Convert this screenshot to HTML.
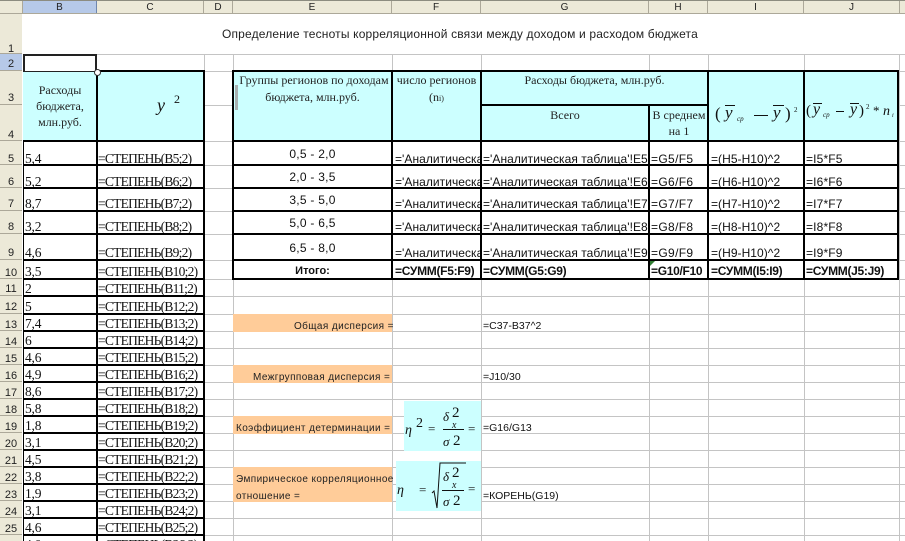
<!DOCTYPE html>
<html><head><meta charset="utf-8">
<style>
html,body{margin:0;padding:0;background:#fff}
#p{position:relative;width:905px;height:541px;overflow:hidden;background:#fff;font-family:"Liberation Sans",sans-serif;color:#000}
#p div{position:absolute}
.h{left:23px;width:882px;height:1px;background:#c4c4c4}
.v{width:1px;top:54px;height:487px;background:#c4c4c4}
.ch{top:1px;height:12px;background:#ece9d8;border-right:1px solid #aca899;box-sizing:border-box;font-size:10px;line-height:13px;text-align:center;color:#222}
.rh{left:0;width:22px;background:#ece9d8;border-bottom:1px solid #aca899;box-sizing:border-box;font-size:11px;text-align:center;color:#222}
.k{background:#000}
.r{left:0;width:905px;height:15px}
.r div{top:0;height:15px;line-height:15px;white-space:nowrap;overflow:hidden}
.b,.c{font-family:"Liberation Serif",serif;font-size:13.5px;color:#111}
.b{left:25px;width:70px;letter-spacing:-.2px}
.c{left:98px;width:105px;letter-spacing:-.75px}
.f,.g,.h2,.i,.j{font-size:12px;letter-spacing:.15px;color:#111}
.r .f,.r .g,.r .h2,.r .i,.r .j{top:1px}
.f{left:395px;width:86px;letter-spacing:.05px}
.g{left:483px;width:166px;letter-spacing:.05px}
.h2{left:651px;width:57px;letter-spacing:.35px}
.i{left:711px;width:93px;letter-spacing:.05px}
.j{left:806px;width:92px}
.r .bb{font-weight:bold;letter-spacing:-.3px;top:0}
.r .fm{font-size:10.5px;letter-spacing:0;top:3px}
.s{font-family:"Liberation Serif",serif;font-size:12px;color:#222;text-align:center;white-space:nowrap}
.o{background:#ffcc99}
.r .ot{font-size:10px;letter-spacing:.4px;white-space:nowrap;color:#222;top:3px}
.e{left:233px;width:159px;text-align:center;font-size:12px;line-height:15px;letter-spacing:.25px;color:#111}
svg{position:absolute;overflow:visible}
svg text{font-family:"Liberation Serif",serif;fill:#111}
</style></head><body><div id="p">

<!-- headers -->
<div style="left:0;top:0;width:905px;height:1px;background:#8c8c80"></div>
<div class="ch" style="left:0;width:23px"></div>
<div class="ch" style="left:23px;width:74px;background:#b6c9e8;border-right-color:#6f86ad">B</div>
<div class="ch" style="left:97px;width:107px">C</div>
<div class="ch" style="left:204px;width:29px">D</div>
<div class="ch" style="left:233px;width:159px">E</div>
<div class="ch" style="left:392px;width:89px">F</div>
<div class="ch" style="left:481px;width:168px">G</div>
<div class="ch" style="left:649px;width:59px">H</div>
<div class="ch" style="left:708px;width:96px">I</div>
<div class="ch" style="left:804px;width:96px">J</div>
<div class="ch" style="left:900px;width:5px;border:0"></div>
<div style="left:0;top:13px;width:905px;height:1px;background:#aca899"></div>

<div class="rh" style="top:14px;height:40px;line-height:70px">1</div>
<div class="rh" style="top:54px;height:17px;line-height:21px;background:#b6c9e8">2</div>
<div class="rh" style="top:71px;height:34px;line-height:54px">3</div>
<div class="rh" style="top:105px;height:36px;line-height:60px">4</div>
<div class="rh" style="top:141px;height:24px;line-height:37px">5</div>
<div class="rh" style="top:165px;height:23px;line-height:35px">6</div>
<div class="rh" style="top:188px;height:23px;line-height:33px">7</div>
<div class="rh" style="top:211px;height:23px;line-height:33px">8</div>
<div class="rh" style="top:234px;height:26px;line-height:38px">9</div>
<div class="rh" style="top:260px;height:19px;line-height:27px">10</div>
<div class="rh" style="top:279px;height:17px;line-height:20px">11</div>
<div class="rh" style="top:296px;height:18px;line-height:22px">12</div>
<div class="rh" style="top:314px;height:17px;line-height:22px">13</div>
<div class="rh" style="top:331px;height:17px;line-height:22px">14</div>
<div class="rh" style="top:348px;height:17px;line-height:22px">15</div>
<div class="rh" style="top:365px;height:17px;line-height:22px">16</div>
<div class="rh" style="top:382px;height:17px;line-height:22px">17</div>
<div class="rh" style="top:399px;height:17px;line-height:22px">18</div>
<div class="rh" style="top:416px;height:17px;line-height:22px">19</div>
<div class="rh" style="top:433px;height:17px;line-height:22px">20</div>
<div class="rh" style="top:450px;height:17px;line-height:22px">21</div>
<div class="rh" style="top:467px;height:17px;line-height:22px">22</div>
<div class="rh" style="top:484px;height:17px;line-height:22px">23</div>
<div class="rh" style="top:501px;height:17px;line-height:22px">24</div>
<div class="rh" style="top:518px;height:17px;line-height:22px">25</div>
<div class="rh" style="top:535px;height:6px;border:0"></div>

<!-- grid -->
<div class="h" style="top:54px"></div><div class="h" style="top:71px"></div><div class="h" style="top:105px"></div>
<div class="h" style="top:141px"></div><div class="h" style="top:165px"></div><div class="h" style="top:188px"></div>
<div class="h" style="top:211px"></div><div class="h" style="top:234px"></div><div class="h" style="top:260px"></div>
<div class="h" style="top:279px"></div><div class="h" style="top:296px"></div><div class="h" style="top:314px"></div>
<div class="h" style="top:331px"></div><div class="h" style="top:348px"></div><div class="h" style="top:365px"></div>
<div class="h" style="top:382px"></div><div class="h" style="top:399px"></div><div class="h" style="top:416px"></div>
<div class="h" style="top:433px"></div><div class="h" style="top:450px"></div><div class="h" style="top:467px"></div>
<div class="h" style="top:484px"></div><div class="h" style="top:501px"></div><div class="h" style="top:518px"></div>
<div class="h" style="top:535px"></div>
<div class="v" style="left:204px"></div><div class="v" style="left:233px"></div><div class="v" style="left:392px"></div>
<div class="v" style="left:481px"></div><div class="v" style="left:649px"></div><div class="v" style="left:708px"></div>
<div class="v" style="left:804px"></div><div class="v" style="left:899px"></div>

<!-- fills -->
<div style="left:23px;top:71px;width:181px;height:70px;background:#ccffff"></div>
<div style="left:233px;top:71px;width:665px;height:70px;background:#ccffff"></div>
<div style="left:233px;top:141px;width:665px;height:138px;background:#fff"></div>
<div style="left:23px;top:141px;width:181px;height:400px;background:#fff"></div>

<div class="o" style="left:233px;top:314px;width:159px;height:18px"></div>
<div class="o" style="left:233px;top:365px;width:159px;height:18px"></div>
<div class="o" style="left:233px;top:416px;width:159px;height:18px"></div>
<div class="o" style="left:233px;top:467px;width:159px;height:35px"></div>
<div style="left:404px;top:401px;width:77px;height:50px;background:#ccffff"></div>
<div style="left:396px;top:461px;width:85px;height:50px;background:#ccffff"></div>

<!-- title -->
<div style="left:23px;top:14px;width:876px;height:40px;background:#fff"></div>
<div style="left:222px;top:27px;font-size:12px;line-height:14px;letter-spacing:.17px;white-space:nowrap;color:#222">Определение тесноты корреляционной связи между доходом и расходом бюджета</div>

<!-- header text -->
<div class="s" style="left:23px;top:82px;width:74px;line-height:16px">Расходы<br>бюджета,<br>млн.руб.</div>
<svg style="left:0;top:0" width="905" height="541">
<text x="157" y="111" font-size="18" font-style="italic">y</text>
<text x="174" y="103" font-size="12">2</text>

<!-- (y_cp - y)^2 -->
<text x="715" y="119" font-size="17">(</text>
<text x="725" y="118" font-size="17" font-style="italic">y</text>
<line x1="725" y1="105.500" x2="735" y2="105.500" stroke="#111" stroke-width="1"/>
<text x="737" y="121" font-size="7" font-style="italic" fill="#777">cp</text>
<line x1="754" y1="115.500" x2="768" y2="115.500" stroke="#111" stroke-width="1"/>
<text x="773" y="118" font-size="17" font-style="italic">y</text>
<line x1="773" y1="105.500" x2="784" y2="105.500" stroke="#111" stroke-width="1"/>
<text x="785" y="119" font-size="17">)</text>
<text x="794" y="112" font-size="7">2</text>

<!-- (y_cp - y)^2*n -->
<text x="806" y="115" font-size="15">(</text>
<text x="813" y="114" font-size="16" font-style="italic">y</text>
<line x1="813" y1="103.500" x2="822" y2="103.500" stroke="#111" stroke-width="1"/>
<text x="823" y="117" font-size="7" font-style="italic" fill="#777">cp</text>
<line x1="836" y1="111.500" x2="844" y2="111.500" stroke="#111" stroke-width="1"/>
<text x="850" y="114" font-size="16" font-style="italic">y</text>
<line x1="850" y1="103.500" x2="859" y2="103.500" stroke="#111" stroke-width="1"/>
<text x="859" y="115" font-size="15">)</text>
<text x="866" y="109" font-size="7">2</text>
<text x="873" y="115" font-size="13">*</text>
<text x="883" y="115" font-size="14" font-style="italic">n</text>
<text x="892" y="117" font-size="6" font-style="italic" fill="#777">i</text>

<!-- eta^2 -->
<text x="405" y="434" font-size="14" font-style="italic">η</text>
<text x="416" y="427" font-size="14">2</text>
<text x="428" y="433" font-size="13">=</text>
<text x="443" y="421" font-size="13" font-style="italic">δ</text>
<text x="452" y="417" font-size="15">2</text>
<text x="452" y="428" font-size="10" font-style="italic">x</text>
<line x1="443" y1="429.500" x2="464" y2="429.500" stroke="#111" stroke-width="1"/>
<text x="443" y="446" font-size="13" font-style="italic">σ</text>
<text x="453" y="445" font-size="15">2</text>
<text x="468" y="433" font-size="13">=</text>

<!-- eta sqrt -->
<text x="397" y="494" font-size="14" font-style="italic">η</text>
<text x="419" y="494" font-size="13">=</text>
<path d="M432 493 L434 491 L437 508 L440 463 L466 463" fill="none" stroke="#111" stroke-width="1"/>
<text x="443" y="481" font-size="13" font-style="italic">δ</text>
<text x="452" y="477" font-size="15">2</text>
<text x="452" y="488" font-size="10" font-style="italic">x</text>
<line x1="442" y1="490.500" x2="464" y2="490.500" stroke="#111" stroke-width="1"/>
<text x="443" y="506" font-size="13" font-style="italic">σ</text>
<text x="453" y="505" font-size="15">2</text>
<text x="468" y="493" font-size="13">=</text>
</svg>

<div class="s" style="left:233px;top:72px;width:159px;line-height:17px">&nbsp;Группы регионов по доходам<br>бюджета, млн.руб.</div>
<div class="s" style="left:392px;top:72px;width:89px;line-height:17px">число регионов<br>(n<span style="font-size:8px">i)</span></div>
<div class="s" style="left:481px;top:72px;width:227px;line-height:17px">Расходы бюджета, млн.руб.</div>
<div class="s" style="left:481px;top:107px;width:168px;line-height:17px">Всего</div>
<div class="s" style="left:650px;top:107px;width:58px;line-height:16px">В среднем<br>на 1</div>
<div style="left:235px;top:85px;width:3px;height:25px;background:#a8b0b0"></div>

<!-- E labels -->
<div class="e" style="top:147px">0,5 - 2,0</div>
<div class="e" style="top:170px">2,0 - 3,5</div>
<div class="e" style="top:193px">3,5 - 5,0</div>
<div class="e" style="top:216px">5,0 - 6,5</div>
<div class="e" style="top:241px">6,5 - 8,0</div>
<div class="e" style="top:264px;font-size:11px;font-weight:bold;letter-spacing:0">Итого:</div>

<!-- rows -->
<div class="r" style="top:151px"><div class="b">5,4</div><div class="c">=СТЕПЕНЬ(B5;2)</div><div class="f">='Аналитическая таблица'!E5</div><div class="g">='Аналитическая таблица'!E5</div><div class="h2">=G5/F5</div><div class="i">=(H5-H10)^2</div><div class="j">=I5*F5</div></div>
<div class="r" style="top:174px"><div class="b">5,2</div><div class="c">=СТЕПЕНЬ(B6;2)</div><div class="f">='Аналитическая таблица'!E6</div><div class="g">='Аналитическая таблица'!E6</div><div class="h2">=G6/F6</div><div class="i">=(H6-H10)^2</div><div class="j">=I6*F6</div></div>
<div class="r" style="top:196px"><div class="b">8,7</div><div class="c">=СТЕПЕНЬ(B7;2)</div><div class="f">='Аналитическая таблица'!E7</div><div class="g">='Аналитическая таблица'!E7</div><div class="h2">=G7/F7</div><div class="i">=(H7-H10)^2</div><div class="j">=I7*F7</div></div>
<div class="r" style="top:219px"><div class="b">3,2</div><div class="c">=СТЕПЕНЬ(B8;2)</div><div class="f">='Аналитическая таблица'!E8</div><div class="g">='Аналитическая таблица'!E8</div><div class="h2">=G8/F8</div><div class="i">=(H8-H10)^2</div><div class="j">=I8*F8</div></div>
<div class="r" style="top:245px"><div class="b">4,6</div><div class="c">=СТЕПЕНЬ(B9;2)</div><div class="f">='Аналитическая таблица'!E9</div><div class="g">='Аналитическая таблица'!E9</div><div class="h2">=G9/F9</div><div class="i">=(H9-H10)^2</div><div class="j">=I9*F9</div></div>
<div class="r" style="top:264px"><div class="b">3,5</div><div class="c">=СТЕПЕНЬ(B10;2)</div><div class="f bb">=СУММ(F5:F9)</div><div class="g bb">=СУММ(G5:G9)</div><div class="h2 bb">=G10/F10</div><div class="i bb">=СУММ(I5:I9)</div><div class="j bb">=СУММ(J5:J9)</div></div>
<div class="r" style="top:281px"><div class="b">2</div><div class="c">=СТЕПЕНЬ(B11;2)</div></div>
<div class="r" style="top:299px"><div class="b">5</div><div class="c">=СТЕПЕНЬ(B12;2)</div></div>
<div class="r" style="top:316px"><div class="b">7,4</div><div class="c">=СТЕПЕНЬ(B13;2)</div><div class="ot" style="left:294px">Общая дисперсия =</div><div class="g fm">=C37-B37^2</div></div>
<div class="r" style="top:333px"><div class="b">6</div><div class="c">=СТЕПЕНЬ(B14;2)</div></div>
<div class="r" style="top:350px"><div class="b">4,6</div><div class="c">=СТЕПЕНЬ(B15;2)</div></div>
<div class="r" style="top:367px"><div class="b">4,9</div><div class="c">=СТЕПЕНЬ(B16;2)</div><div class="ot" style="left:253px">Межгрупповая дисперсия =</div><div class="g fm">=J10/30</div></div>
<div class="r" style="top:384px"><div class="b">8,6</div><div class="c">=СТЕПЕНЬ(B17;2)</div></div>
<div class="r" style="top:401px"><div class="b">5,8</div><div class="c">=СТЕПЕНЬ(B18;2)</div></div>
<div class="r" style="top:418px"><div class="b">1,8</div><div class="c">=СТЕПЕНЬ(B19;2)</div><div class="ot" style="left:236px">Коэффициент детерминации =</div><div class="g fm">=G16/G13</div></div>
<div class="r" style="top:435px"><div class="b">3,1</div><div class="c">=СТЕПЕНЬ(B20;2)</div></div>
<div class="r" style="top:452px"><div class="b">4,5</div><div class="c">=СТЕПЕНЬ(B21;2)</div></div>
<div class="r" style="top:469px"><div class="b">3,8</div><div class="c">=СТЕПЕНЬ(B22;2)</div><div class="ot" style="left:236px">Эмпирическое корреляционное</div></div>
<div class="r" style="top:486px"><div class="b">1,9</div><div class="c">=СТЕПЕНЬ(B23;2)</div><div class="ot" style="left:236px">отношение =</div><div class="g fm">=КОРЕНЬ(G19)</div></div>
<div class="r" style="top:503px"><div class="b">3,1</div><div class="c">=СТЕПЕНЬ(B24;2)</div></div>
<div class="r" style="top:520px"><div class="b">4,6</div><div class="c">=СТЕПЕНЬ(B25;2)</div></div>
<div class="r" style="top:537px"><div class="b">4,0</div><div class="c">=СТЕПЕНЬ(B26;2)</div></div>

<!-- thick borders: table 1 -->
<div class="k" style="left:97px;top:70px;width:108px;height:2px"></div>
<div class="k" style="left:23px;top:140px;width:182px;height:2px"></div>
<div class="k" style="left:23px;top:164px;width:182px;height:2px"></div>
<div class="k" style="left:23px;top:187px;width:182px;height:2px"></div>
<div class="k" style="left:23px;top:210px;width:182px;height:2px"></div>
<div class="k" style="left:23px;top:233px;width:182px;height:2px"></div>
<div class="k" style="left:23px;top:259px;width:182px;height:2px"></div>
<div class="k" style="left:23px;top:278px;width:182px;height:2px"></div>
<div class="k" style="left:23px;top:295px;width:182px;height:2px"></div>
<div class="k" style="left:23px;top:313px;width:182px;height:2px"></div>
<div class="k" style="left:23px;top:330px;width:182px;height:2px"></div>
<div class="k" style="left:23px;top:347px;width:182px;height:2px"></div>
<div class="k" style="left:23px;top:364px;width:182px;height:2px"></div>
<div class="k" style="left:23px;top:381px;width:182px;height:2px"></div>
<div class="k" style="left:23px;top:398px;width:182px;height:2px"></div>
<div class="k" style="left:23px;top:415px;width:182px;height:2px"></div>
<div class="k" style="left:23px;top:432px;width:182px;height:2px"></div>
<div class="k" style="left:23px;top:449px;width:182px;height:2px"></div>
<div class="k" style="left:23px;top:466px;width:182px;height:2px"></div>
<div class="k" style="left:23px;top:483px;width:182px;height:2px"></div>
<div class="k" style="left:23px;top:500px;width:182px;height:2px"></div>
<div class="k" style="left:23px;top:517px;width:182px;height:2px"></div>
<div class="k" style="left:23px;top:534px;width:182px;height:2px"></div>
<div class="k" style="left:23px;top:141px;width:1px;height:400px"></div>
<div class="k" style="left:96px;top:70px;width:2px;height:471px"></div>
<div class="k" style="left:203px;top:70px;width:2px;height:471px"></div>

<!-- thick borders: table 2 -->
<div class="k" style="left:232px;top:70px;width:667px;height:2px"></div>
<div class="k" style="left:481px;top:104px;width:228px;height:2px"></div>
<div class="k" style="left:232px;top:140px;width:667px;height:2px"></div>
<div class="k" style="left:232px;top:164px;width:667px;height:2px"></div>
<div class="k" style="left:232px;top:187px;width:667px;height:2px"></div>
<div class="k" style="left:232px;top:210px;width:667px;height:2px"></div>
<div class="k" style="left:232px;top:233px;width:667px;height:2px"></div>
<div class="k" style="left:232px;top:259px;width:667px;height:2px"></div>
<div class="k" style="left:232px;top:278px;width:667px;height:2px"></div>
<div class="k" style="left:232px;top:70px;width:2px;height:210px"></div>
<div class="k" style="left:391px;top:70px;width:2px;height:210px"></div>
<div class="k" style="left:480px;top:70px;width:2px;height:210px"></div>
<div class="k" style="left:648px;top:104px;width:2px;height:176px"></div>
<div class="k" style="left:707px;top:70px;width:2px;height:210px"></div>
<div class="k" style="left:803px;top:70px;width:2px;height:210px"></div>
<div class="k" style="left:897px;top:70px;width:2px;height:210px"></div>

<!-- green error marker -->
<svg style="left:650px;top:261px" width="6" height="6"><path d="M0 0H5L0 5Z" fill="#2f7d32"/></svg>

<!-- selection -->
<div style="left:23px;top:54px;width:74px;height:18px;border:2px solid #222;border-bottom:1px solid #222;box-sizing:border-box;background:#fff"></div>
<div style="left:94px;top:69px;width:5px;height:5px;border-radius:50%;background:#fff;border:1px solid #333"></div>

</div></body></html>
